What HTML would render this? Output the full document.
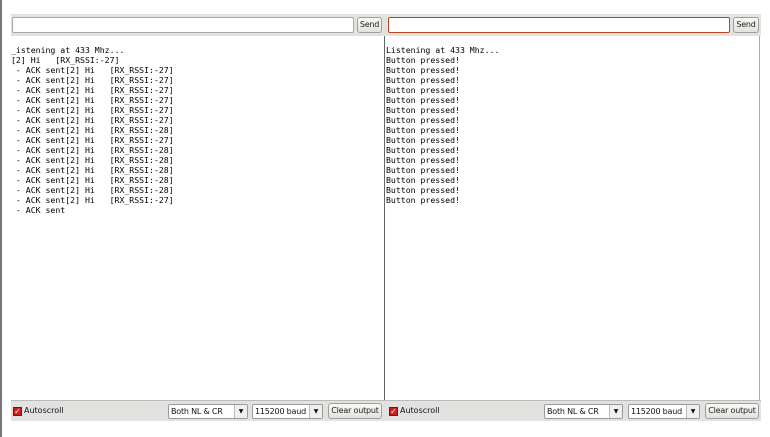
<!DOCTYPE html>
<html><head><style>
*{margin:0;padding:0;box-sizing:border-box}
body{width:770px;height:437px;background:#fff;position:relative;overflow:hidden;font-family:"DejaVu Sans","Liberation Sans",sans-serif}
.a{position:absolute;white-space:nowrap}
.bar{background:#e2e2e0}
.inp{background:#fff;border:1px solid #a8a8a8;border-radius:2px}
.btn{background:linear-gradient(#f8f8f6,#e2e2de);border:1px solid #9e9e9a;border-radius:3px;font-size:8px;letter-spacing:-0.2px;color:#222;text-align:center;line-height:14px;overflow:hidden}
.out{font-family:"DejaVu Sans Mono","Liberation Mono",monospace;font-size:8.2px;line-height:10px;white-space:pre;color:#000}
.sel{background:#fff;border:1px solid #9a9a9a;border-radius:2px;font-size:8px;letter-spacing:-0.2px;line-height:13px;padding-left:2px;color:#111;overflow:hidden}
.sel i{position:absolute;right:0;top:0;width:13px;height:13px;border-left:1px solid #bbb;background:#f0f0f0;font-style:normal;font-size:6px;text-align:center;line-height:13px;letter-spacing:0}
.cb{width:9px;height:9px;background:#c8201a;border:1px solid #801010;color:#fff;font-size:8px;line-height:7px;text-align:center}
.lbl{font-size:8px;color:#111}
</style></head><body>
<div class="a" style="left:0;top:0;width:2px;height:437px;background:#777"></div>
<div class="a bar" style="left:11px;top:14px;width:750px;height:22px"></div>
<div class="a inp" style="left:12px;top:17px;width:342px;height:16px"></div>
<div class="a btn" style="left:357px;top:17px;width:25px;height:16px">Send</div>
<div class="a inp" style="left:388px;top:17px;width:342px;height:16px;border-color:#c0441e"></div>
<div class="a btn" style="left:733px;top:17px;width:26px;height:16px">Send</div>
<div class="a" style="left:11px;top:36px;width:750px;height:364px;background:#fff"></div>
<div class="a" style="left:384px;top:36px;width:1px;height:364px;background:#666"></div>
<div class="a" style="left:759px;top:36px;width:1px;height:364px;background:#aaa"></div>
<div class="a out" style="left:11px;top:45px">_istening at 433 Mhz...
[2] Hi   [RX_RSSI:-27]
 - ACK sent[2] Hi   [RX_RSSI:-27]
 - ACK sent[2] Hi   [RX_RSSI:-27]
 - ACK sent[2] Hi   [RX_RSSI:-27]
 - ACK sent[2] Hi   [RX_RSSI:-27]
 - ACK sent[2] Hi   [RX_RSSI:-27]
 - ACK sent[2] Hi   [RX_RSSI:-27]
 - ACK sent[2] Hi   [RX_RSSI:-28]
 - ACK sent[2] Hi   [RX_RSSI:-27]
 - ACK sent[2] Hi   [RX_RSSI:-28]
 - ACK sent[2] Hi   [RX_RSSI:-28]
 - ACK sent[2] Hi   [RX_RSSI:-28]
 - ACK sent[2] Hi   [RX_RSSI:-28]
 - ACK sent[2] Hi   [RX_RSSI:-28]
 - ACK sent[2] Hi   [RX_RSSI:-27]
 - ACK sent</div>
<div class="a out" style="left:386px;top:45px">Listening at 433 Mhz...
Button pressed!
Button pressed!
Button pressed!
Button pressed!
Button pressed!
Button pressed!
Button pressed!
Button pressed!
Button pressed!
Button pressed!
Button pressed!
Button pressed!
Button pressed!
Button pressed!
Button pressed!</div>
<div class="a bar" style="left:11px;top:400px;width:750px;height:21px;border-top:1px solid #bbb"></div>
<div class="a cb" style="left:13px;top:407px">✓</div>
<div class="a lbl" style="left:24px;top:406px">Autoscroll</div>
<div class="a sel" style="left:168px;top:404px;width:80px;height:15px">Both NL &amp; CR<i>▼</i></div>
<div class="a sel" style="left:252px;top:404px;width:71px;height:15px">115200 baud<i>▼</i></div>
<div class="a btn" style="left:328px;top:403px;width:54px;height:16px">Clear output</div>
<div class="a cb" style="left:389px;top:407px">✓</div>
<div class="a lbl" style="left:400px;top:406px">Autoscroll</div>
<div class="a sel" style="left:544px;top:404px;width:79px;height:15px">Both NL &amp; CR<i>▼</i></div>
<div class="a sel" style="left:628px;top:404px;width:72px;height:15px">115200 baud<i>▼</i></div>
<div class="a btn" style="left:705px;top:403px;width:54px;height:16px">Clear output</div>
</body></html>
